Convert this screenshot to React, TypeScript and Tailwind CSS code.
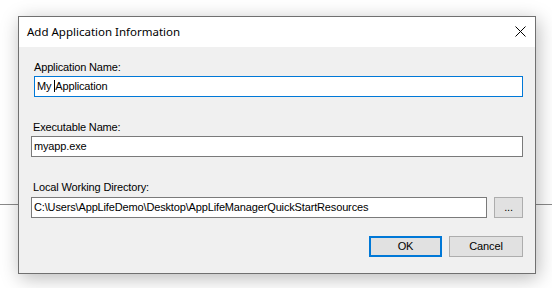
export default function App() {
  const body = "font-['Liberation_Sans',Arial,sans-serif] text-[11px] tracking-[-0.15px] text-black";

  return (
    <div className="relative w-[552px] h-[288px] overflow-hidden bg-white">
      {/* line from the window behind */}
      <div className="absolute left-0 right-0 top-[204px] h-px bg-[#8a8a8a]" />

      <div className="relative pl-[18px] pt-[16px]">
        <div className="flex h-[258px] w-[518px] flex-col border border-[#707070] bg-[#f0f0f0] shadow-[2px_4px_18px_rgba(0,0,0,0.28)]">
          {/* title bar */}
          <div className="flex h-[30px] items-center justify-between bg-white pl-[8px] pr-[9px]">
            <span className="font-['Noto_Sans','Open_Sans',sans-serif] text-[11.5px] text-black">
              Add Application Information
            </span>
            <svg width="11" height="11" viewBox="0 0 11 11" className="mt-[-1px]">
              <path d="M0.5 0.5 L10.5 10.5 M10.5 0.5 L0.5 10.5" stroke="#000" strokeWidth="1" />
            </svg>
          </div>

          {/* body */}
          <div className={`flex flex-col pl-[12px] ${body}`}>
            <div className="ml-[3px] mt-[13px] leading-[14px]">Application Name:</div>
            <div className="ml-[3px] mt-[2px] h-[21px] w-[489px] whitespace-pre border border-[#0078d7] bg-white pl-[2px] leading-[19px]">
              My <span className="inline-block h-[12px] w-px translate-y-[2px] bg-black" />Application
            </div>

            <div className="ml-[2px] mt-[23px] leading-[14px]">Executable Name:</div>
            <div className="mt-[2px] h-[21px] w-[492px] border border-[#7a7a7a] bg-white pl-[2px] leading-[19px]">
              myapp.exe
            </div>

            <div className="ml-[2px] mt-[23px] leading-[14px]">Local Working Directory:</div>
            <div className="mt-[3px] flex items-center gap-[7px]">
              <div className="h-[21px] w-[456px] border border-[#7a7a7a] bg-white pl-[2px] leading-[19px]">
                C:\Users\AppLifeDemo\Desktop\AppLifeManagerQuickStartResources
              </div>
              <button className="flex h-[21px] w-[29px] items-center justify-center border border-[#adadad] bg-[#e1e1e1] leading-[19px]">
                ...
              </button>
            </div>

            <div className="mt-[18px] flex justify-end gap-[7px] pr-[12px]">
              <button className="flex h-[21px] w-[73px] items-center justify-center border-2 border-[#0078d7] bg-[#e1e1e1]">
                OK
              </button>
              <button className="flex h-[21px] w-[74px] items-center justify-center border border-[#adadad] bg-[#e1e1e1]">
                Cancel
              </button>
            </div>
          </div>
        </div>
      </div>
    </div>
  );
}
